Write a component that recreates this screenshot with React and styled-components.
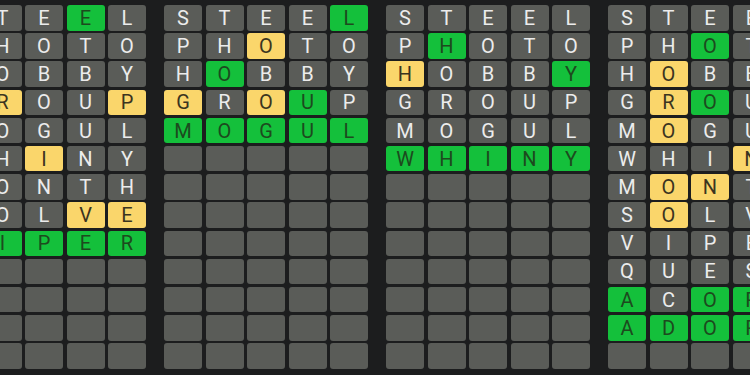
import React from "react";
import styled, { createGlobalStyle } from "styled-components";

const GUESSES = [
  "STEEL",
  "PHOTO",
  "HOBBY",
  "GROUP",
  "MOGUL",
  "WHINY",
  "MONTH",
  "SOLVE",
  "VIPER",
  "QUEST",
  "ACORN",
  "ADORN",
];

// g = green, y = yellow, . = gray
const boards = [
  {
    rows: 9,
    marks: [
      "...g.",
      ".....",
      ".....",
      ".y..y",
      ".....",
      "..y..",
      ".....",
      "...yy",
      "ggggg",
    ],
  },
  {
    rows: 5,
    marks: ["....g", "..y..", ".g...", "y.yg.", "ggggg"],
  },
  {
    rows: 6,
    marks: [".....", ".g...", "y...g", ".....", ".....", "ggggg"],
  },
  {
    rows: 12,
    marks: [
      ".....",
      "..g..",
      ".y...",
      ".yg..",
      ".y...",
      "...y.",
      ".yy..",
      ".y...",
      ".....",
      ".....",
      "g.gg.",
      "ggggg",
    ],
  },
];

const TOTAL_ROWS = 13;

const GlobalStyle = createGlobalStyle`
  html, body {
    margin: 0;
    padding: 0;
    background: #1c1d1e;
    overflow: hidden;
  }
`;

const Page = styled.div`
  width: 750px;
  height: 375px;
  overflow: hidden;
  background: #1c1d1e;
`;

const Strip = styled.div`
  display: flex;
  gap: 18px;
  margin-left: -58px;
  padding-top: 5px;
`;

const Board = styled.div`
  display: grid;
  grid-template-columns: repeat(5, 38px);
  grid-auto-rows: 25.5px;
  column-gap: 3.5px;
  row-gap: 2.7px;
  flex-shrink: 0;
`;

const tileColors = {
  g: { bg: "#14c03b", fg: "#1d4a1e" },
  y: { bg: "#fad66b", fg: "#3b3420" },
  ".": { bg: "#5a5c58", fg: "#ececec" },
};

const Tile = styled.div`
  display: flex;
  align-items: center;
  justify-content: center;
  border-radius: 3px;
  background: ${(p) => tileColors[p.$mark].bg};
  color: ${(p) => tileColors[p.$mark].fg};
  font-family: Roboto, "Liberation Sans", sans-serif;
  font-size: 20px;
  line-height: 1;
`;

function App() {
  return (
    <Page>
      <GlobalStyle />
      <Strip>
        {boards.map((board, b) => (
          <Board key={b}>
            {Array.from({ length: TOTAL_ROWS }).map((_, r) =>
              Array.from({ length: 5 }).map((_, c) => {
                const filled = r < board.rows;
                return (
                  <Tile key={`${r}-${c}`} $mark={filled ? board.marks[r][c] : "."}>
                    {filled ? GUESSES[r][c] : ""}
                  </Tile>
                );
              })
            )}
          </Board>
        ))}
      </Strip>
    </Page>
  );
}

export default App;
